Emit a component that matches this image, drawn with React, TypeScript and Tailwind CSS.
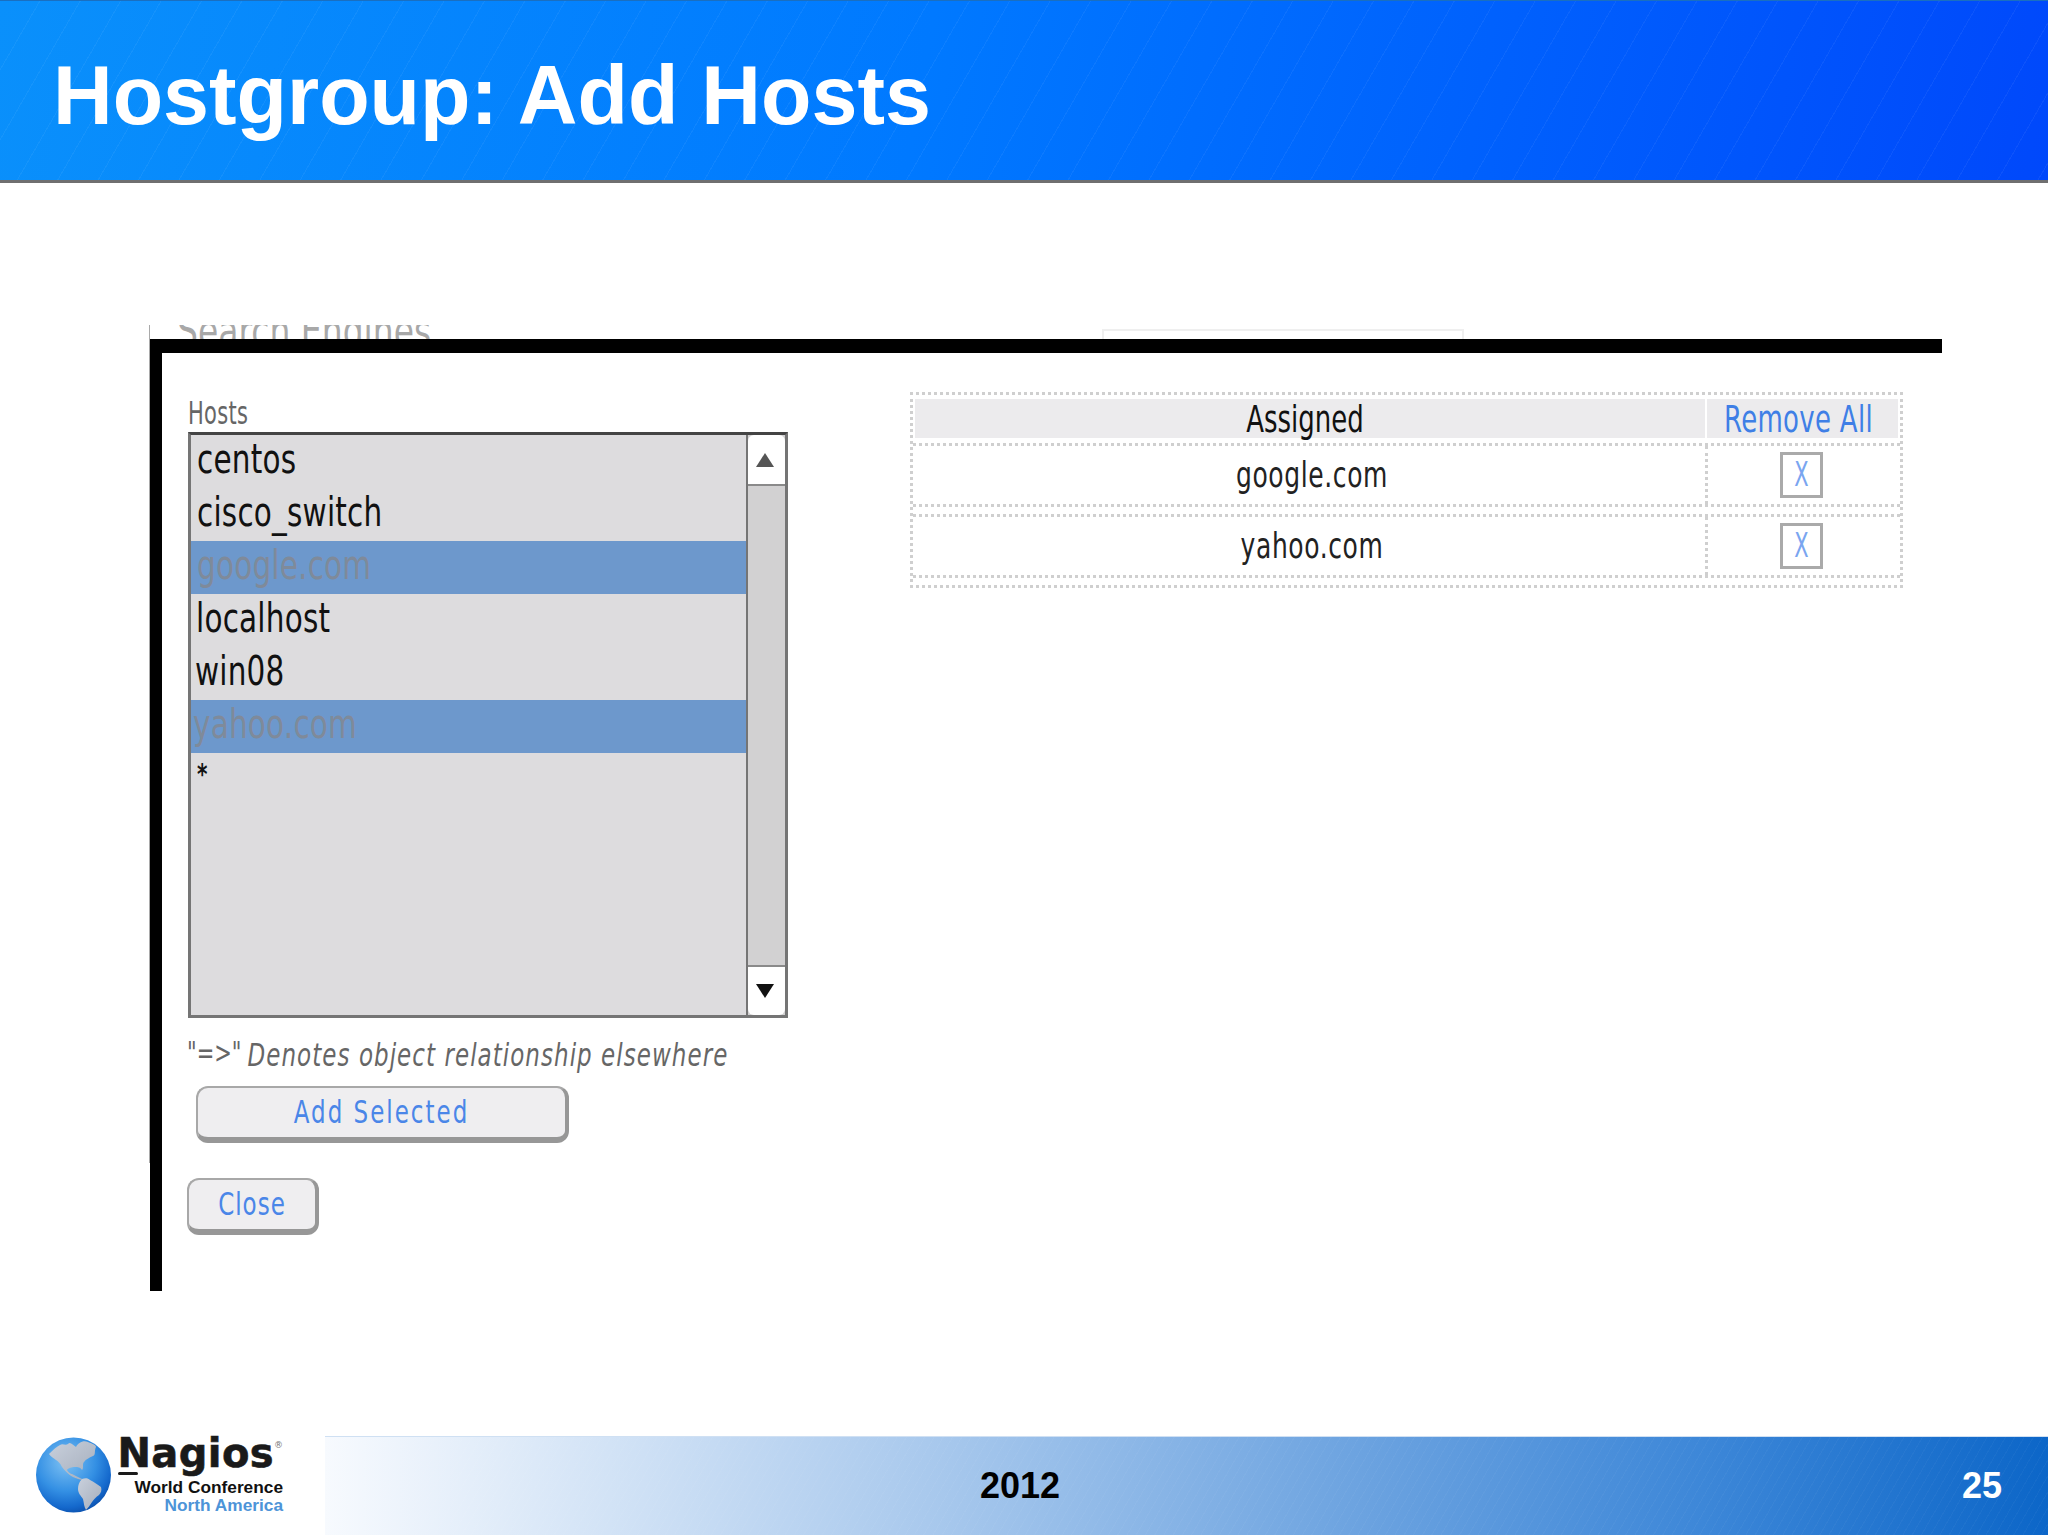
import React from 'react';

// list rows of the host picker
const HOSTS = [
  { name: 'centos', selected: false, pad: 'pl-[6px]' },
  { name: 'cisco_switch', selected: false, pad: 'pl-[6px]' },
  { name: 'google.com', selected: true, pad: 'pl-[6px]' },
  { name: 'localhost', selected: false, pad: 'pl-[5px]' },
  { name: 'win08', selected: false, pad: 'pl-[4px]' },
  { name: 'yahoo.com', selected: true, pad: 'pl-[2px]' },
];

const ASSIGNED = ['google.com', 'yahoo.com'];

const Tall: React.FC<{ className?: string; children: React.ReactNode }> = ({ className = '', children }) => (
  <span className={`inline-block whitespace-nowrap leading-none scale-y-[1.4] ${className}`}>{children}</span>
);

const Globe: React.FC = () => (
  <svg width="75" height="76" viewBox="0 0 75 76" className="shrink-0">
    <defs>
      <radialGradient id="sea" cx="40%" cy="32%" r="72%">
        <stop offset="0%" stopColor="#7fc2f3" />
        <stop offset="55%" stopColor="#3490e4" />
        <stop offset="85%" stopColor="#1468cc" />
        <stop offset="100%" stopColor="#0b50ac" />
      </radialGradient>
      <linearGradient id="land" x1="0" y1="0" x2="1" y2="1">
        <stop offset="0%" stopColor="#c9d0dc" />
        <stop offset="100%" stopColor="#a4adbb" />
      </linearGradient>
    </defs>
    <circle cx="37.5" cy="38" r="37.5" fill="url(#sea)" />
    <path
      d="M13 17 C17 13 20 10 24 8 C27 6 29 9 32 7 C34 4 37 8 40 10 C42 6 47 3 52 5 C57 7 60 8 60 10 C58 14 60 18 57 19 C53 21 50 22 48 25 C46 27 48 31 46 33 C44 30 42 30 39 30 C36 30 32 31 31 33 C33 37 37 37 38 38 C41 40 45 41 48 43 C44 43 40 41 37 40 C33 38 29 34 26 30 C24 26 22 24 20 23 C18 21 15 20 13 17 Z"
      fill="url(#land)"
    />
    <path
      d="M46 42 C49 41 52 41 54 43 C58 45 61 47 65 50 C66 53 65 56 63 58 C60 60 58 62 56 65 C54 68 52 71 50 73 C48 70 48 66 47 62 C45 59 42 56 42 52 C42 48 43 45 46 42 Z"
      fill="url(#land)"
    />
  </svg>
);

const App: React.FC = () => {
  return (
    <div className="w-[2048px] h-[1535px] flex flex-col overflow-hidden bg-white font-['Liberation_Sans',Arial,sans-serif]">
      {/* Title bar */}
      <header className="h-[183px] shrink-0 flex items-center pl-[53px] pt-[12px] border-t border-t-[#1a6fc0] border-b-[3px] border-b-[#6f6f70] bg-[image:repeating-linear-gradient(120deg,transparent_0,transparent_34px,rgba(255,255,255,0.05)_34px,rgba(255,255,255,0.05)_35px),linear-gradient(100deg,#0a90fb_0%,#0079ff_45%,#0048fb_100%)]">
        <h1 className="text-[82.6px] leading-none font-bold text-white">Hostgroup: Add Hosts</h1>
      </header>

      {/* Screenshot of the dialog */}
      <main className="flex-1 flex pl-[149px] pt-[142px] font-['DejaVu_Sans',sans-serif]">
        <div className="w-px h-[838px] bg-[#a9a9a9] shrink-0" />
        <div className="w-[1792px] flex flex-col">
          <div className="h-[14px] flex pl-[27px] overflow-hidden shrink-0">
            <div className="w-[925px] h-[14px] overflow-hidden shrink-0">
              <Tall className="text-[33px] text-[#a8a8a8] -mt-[24px]">Search Engines</Tall>
            </div>
            <div className="w-[362px] h-[10px] self-end border-t-2 border-x-2 border-[#efefef]" />
          </div>

          <div className="h-[952px] flex border-t-[14px] border-l-[12px] border-black">
            {/* Left column */}
            <div className="w-[748px] shrink-0 pl-[26px] flex flex-col">
              <div className="h-[79px] flex items-end pb-[7px]">
                <Tall className="text-[21px] text-[#666666] tracking-[0.3px] scale-y-[1.5]">Hosts</Tall>
              </div>

              <div className="w-[600px] h-[586px] flex shrink-0 bg-[#dddcde] border-[3px] border-[#757575] border-t-[#444444]">
                <ul className="flex-1 flex flex-col">
                  {HOSTS.map((h) => (
                    <li
                      key={h.name}
                      className={`h-[53px] flex items-center pb-[3px] ${h.pad} ${h.selected ? 'bg-[#6d98cc] text-[#7f8a9a]' : 'text-[#111111]'}`}
                    >
                      <Tall className="text-[29.5px] tracking-[0.2px]">{h.name}</Tall>
                    </li>
                  ))}
                  <li className="h-[53px] pl-[6px] pt-[11px] text-[#111111]">
                    <Tall className="text-[20px] font-bold">*</Tall>
                  </li>
                </ul>
                <div className="w-[39px] shrink-0 flex flex-col bg-[#d2d1d2] border-l-2 border-[#757575]">
                  <div className="h-[51px] shrink-0 flex items-center justify-center pr-[3px] bg-white rounded-t-md border-b-2 border-[#8a8a8a]">
                    <svg width="20" height="16" viewBox="0 0 20 16"><polygon points="10,1 19,15 1,15" fill="#555555" /></svg>
                  </div>
                  <div className="flex-1" />
                  <div className="h-[50px] shrink-0 flex items-center justify-center pr-[3px] bg-white rounded-b-md border-t-2 border-[#8a8a8a]">
                    <svg width="20" height="16" viewBox="0 0 20 16"><polygon points="1,1 19,1 10,15" fill="#111111" /></svg>
                  </div>
                </div>
              </div>

              <p className="mt-[26px] h-[24px] -ml-px flex gap-[6px] text-[23px] text-[#666666] leading-none whitespace-nowrap">
                <Tall className="text-[21px]">"=&gt;"</Tall>
                <Tall className="italic tracking-[1.05px]">Denotes object relationship elsewhere</Tall>
              </p>

              <button className="mt-[18px] ml-[8px] w-[373px] h-[57px] shrink-0 rounded-xl bg-[#efeef0] border-2 border-[#a8a8a8] border-r-4 border-b-[6px] border-b-[#979797] border-r-[#979797] text-[#4a86e8]">
                <Tall className="text-[23px] tracking-[2px] mt-[3px]">Add Selected</Tall>
              </button>

              <button className="mt-[35px] -ml-px w-[132px] h-[57px] shrink-0 rounded-xl bg-[#efeef0] border-2 border-[#a8a8a8] border-r-4 border-b-[6px] border-b-[#979797] border-r-[#979797] text-[#4a86e8]">
                <Tall className="text-[23px] tracking-[1px] mt-[3px]">Close</Tall>
              </button>
            </div>

            {/* Assigned table */}
            <div className="mt-[39px] w-[993px] h-[196px] shrink-0 flex flex-col border-[3px] border-dotted border-[#cfcfcf] px-[2px] pt-[4px]">
              <div className="h-[39px] flex gap-[2px] shrink-0">
                <div className="w-[790px] shrink-0 bg-[#ecebed] flex items-center justify-center pr-[10px] text-[#111111]">
                  <Tall className="text-[26px]">Assigned</Tall>
                </div>
                <div className="flex-1 bg-[#ecebed] flex items-center justify-center pr-[8px] text-[#3f7fe6]">
                  <Tall className="text-[26px] tracking-[0.3px]">Remove All</Tall>
                </div>
              </div>
              {ASSIGNED.map((host, i) => (
                <div
                  key={host}
                  className={`h-[64px] -mx-[2px] flex shrink-0 border-y-[3px] border-dotted border-[#cfcfcf] ${i === 0 ? 'mt-[5px]' : 'mt-[7px]'}`}
                >
                  <div className="w-[795px] shrink-0 flex items-center justify-center pl-[6px] text-[#222222] border-r-[3px] border-dotted border-[#cfcfcf]">
                    <Tall className="text-[25px] tracking-[0.6px]">{host}</Tall>
                  </div>
                  <div className="flex-1 flex items-center justify-center pr-[5px]">
                    <span className="w-[43px] h-[46px] flex items-center justify-center border-[3px] border-[#aaaaaa] bg-white text-[#7aa5f0]">
                      <Tall className="text-[21px] scale-y-[1.6]">X</Tall>
                    </span>
                  </div>
                </div>
              ))}
            </div>
          </div>
        </div>
      </main>

      {/* Footer */}
      <footer className="h-[99px] shrink-0 flex">
        <div className="w-[325px] shrink-0 flex items-start pt-px pl-[36px] gap-[9px]">
          <Globe />
          <div className="flex flex-col items-end w-[163px]">
            <div className="h-[33px] flex items-start text-[#1a1a1a] font-['DejaVu_Sans',sans-serif]">
              <span className="text-[40px] leading-[33px] font-bold tracking-[0.4px] whitespace-nowrap [-webkit-text-stroke:0.6px_#1a1a1a]">Nagios</span>
              <span className="text-[9px] leading-none mt-[4px] text-[#777777]">®</span>
            </div>
            <div className="self-start mt-[2px] -ml-[2px] w-[20px] h-[3px] bg-[#1a1a1a] rounded-full" />
            <div className="text-[17.3px] leading-[18px] mt-[3px] font-bold text-[#111111] whitespace-nowrap">World Conference</div>
            <div className="text-[17.3px] leading-[19px] font-bold text-[#4d94d8] whitespace-nowrap">North America</div>
          </div>
        </div>
        <div className="flex-1 flex items-center justify-between pl-[655px] pr-[46px] border-t border-t-[#cfe0f3] bg-[image:repeating-linear-gradient(120deg,transparent_0,transparent_7px,rgba(255,255,255,0.03)_7px,rgba(255,255,255,0.03)_8px),linear-gradient(90deg,#f7fafe_0%,#a9c9ed_35%,#6ca3e0_60%,#3d87d8_80%,#0c66c8_100%)]">
          <span className="text-[36px] leading-none font-bold text-black">2012</span>
          <span className="text-[36px] leading-none font-bold text-white">25</span>
        </div>
      </footer>
    </div>
  );
};

export default App;
